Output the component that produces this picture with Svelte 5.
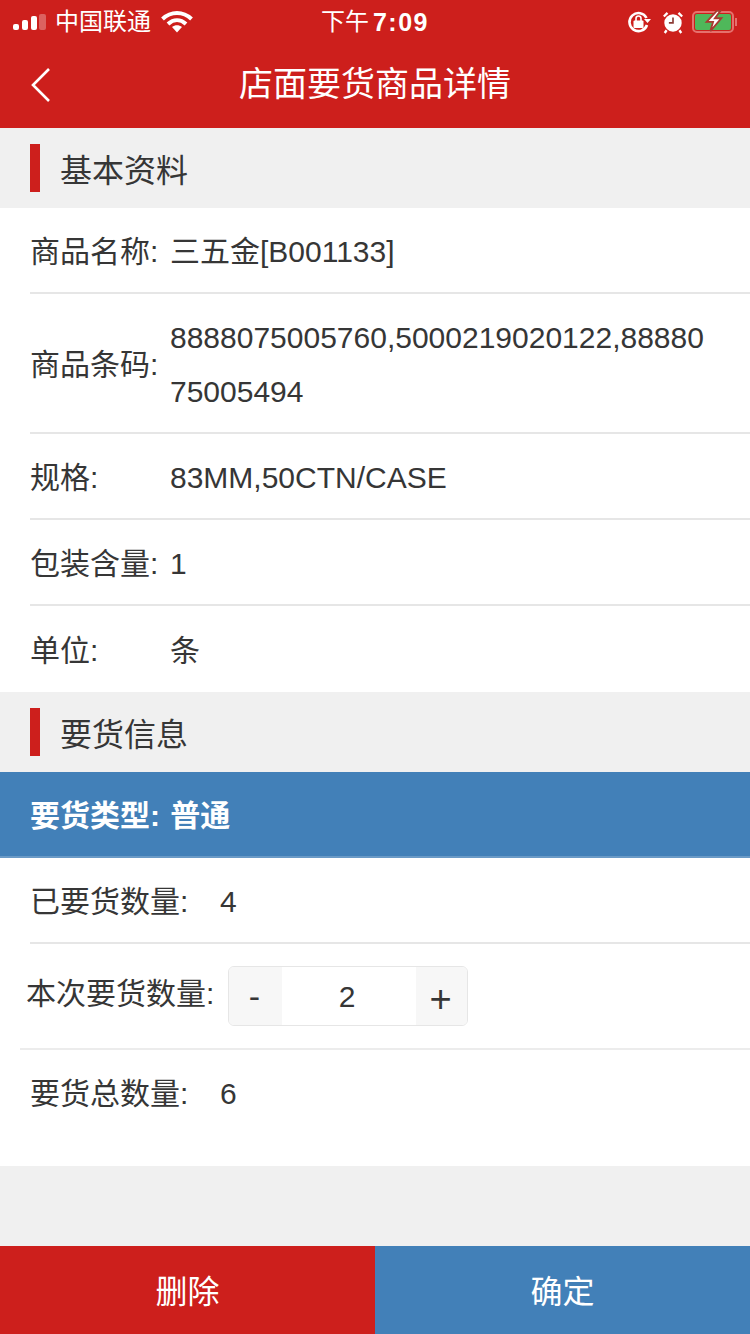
<script>
  const basics = [
    { label: '商品名称:', value: '三五金[B001133]' },
    { label: '商品条码:', value: '8888075005760,5000219020122,8888075005494', tall: true },
    { label: '规格:', value: '83MM,50CTN/CASE' },
    { label: '包装含量:', value: '1' },
    { label: '单位:', value: '条' }
  ];
</script>

<div class="page">
  <header class="top">
    <div class="status">
      <div class="status-left">
        <svg class="signal" width="34" height="20" viewBox="0 0 34 20" aria-hidden="true">
          <rect x="0" y="12" width="6" height="6" rx="2" fill="#fff" />
          <rect x="9" y="8" width="6" height="10" rx="2" fill="#fff" />
          <rect x="18" y="4" width="6" height="14" rx="2" fill="#fff" />
          <rect x="26" y="2" width="7" height="16" rx="2" fill="#fff" opacity="0.3" />
        </svg>
        <span class="carrier">中国联通</span>
        <svg class="wifi" width="32" height="22" viewBox="0 0 32 22" aria-hidden="true">
          <path d="M1.500 8C10 0 22 0 30.500 8" fill="none" stroke="#fff" stroke-width="4" />
          <path d="M7 13C12.500 8 19.500 8 25 13" fill="none" stroke="#fff" stroke-width="4" />
          <path d="M11 16C14 13.500 18 13.500 21 16L16 21.500Z" fill="#fff" />
        </svg>
      </div>
      <div class="clock">下午<b>7:09</b></div>
      <div class="status-right">
        <svg class="lock" width="24" height="24" viewBox="0 0 24 24" aria-hidden="true">
          <path d="M19.500 8A9 9 0 1 0 20 15" fill="none" stroke="#fff" stroke-width="2.600" />
          <path d="M17 9L24 9L20.500 13Z" fill="#fff" />
          <rect x="6.500" y="10.500" width="10" height="7.500" rx="1" fill="#fff" />
          <path d="M9 11V8.500a2.500 2.500 0 0 1 5 0V11" fill="none" stroke="#fff" stroke-width="1.600" />
        </svg>
        <svg class="alarm" width="22" height="24" viewBox="0 0 24 26" aria-hidden="true">
          <circle cx="12" cy="14" r="9.500" fill="#fff" />
          <path d="M2 7L6 3M22 7L18 3M5 22L3 25M19 22L21 25" stroke="#fff" stroke-width="2.500" />
          <path d="M12 8V14H7.500" fill="none" stroke="#8c3a34" stroke-width="1.800" />
        </svg>
        <div class="battery">
          <div class="battery-body">
            <svg class="bolt" width="22" height="22" viewBox="0 0 24 24" aria-hidden="true">
              <path d="M15 1L4 13H11L8 23L20 9H13L19 1Z" fill="#fff" stroke="#a83a30" stroke-width="2" />
            </svg>
          </div>
          <div class="battery-cap"></div>
        </div>
      </div>
    </div>
    <div class="nav">
      <svg class="back" width="24" height="36" viewBox="0 0 24 36" aria-hidden="true">
        <path d="M20 2L4 18L20 34" fill="none" stroke="#fff" stroke-width="2.600" />
      </svg>
      <h1>店面要货商品详情</h1>
    </div>
  </header>

  <h2 class="section"><span class="mark"></span><span class="section-text">基本资料</span></h2>
  <section class="list">
    {#each basics as row}
      <div class="row" class:tall={row.tall}>
        <span class="label">{row.label}</span>
        <span class="value">{row.value}</span>
      </div>
    {/each}
  </section>

  <h2 class="section"><span class="mark"></span><span class="section-text">要货信息</span></h2>
  <div class="type"><span class="nudge">要货类型: 普通</span></div>
  <section class="order">
    <div class="order-row">
      <span class="order-label">已要货数量:</span><span class="order-value">4</span>
    </div>
    <div class="qty-row">
      <span class="qty-label">本次要货数量:</span>
      <div class="stepper">
        <span class="step minus">-</span>
        <span class="count">2</span>
        <span class="step plus">+</span>
      </div>
    </div>
    <div class="order-row total">
      <span class="order-label">要货总数量:</span><span class="order-value">6</span>
    </div>
  </section>

  <div class="spacer"></div>

  <footer class="actions">
    <button class="del">删除</button>
    <button class="ok">确定</button>
  </footer>
</div>

<style>
  :global(body) {
    margin: 0;
    background: #f0f0f0;
  }
  .page {
    width: 750px;
    height: 1334px;
    display: flex;
    flex-direction: column;
    background: #f0f0f0;
    color: #363636;
    font-family: "Liberation Sans", "Noto Sans CJK SC", sans-serif;
    font-size: 30px;
    line-height: 44px;
    overflow: hidden;
  }
  .top {
    height: 128px;
    background: #cd1f1c;
    color: #fff;
    flex: none;
  }
  .status {
    height: 40px;
    display: grid;
    grid-template-columns: 1fr auto 1fr;
    align-items: center;
    padding: 0 13px;
  }
  .status-left {
    display: flex;
    align-items: center;
  }
  .carrier {
    font-size: 24px;
    margin-left: 8px;
  }
  .wifi {
    margin-left: 10px;
  }
  .clock {
    font-size: 24px;
    display: flex;
    align-items: center;
  }
  .clock b {
    margin-left: 4px;
    letter-spacing: 1.500px;
    font-size: 25px;
  }
  .status-right {
    display: flex;
    align-items: center;
    justify-content: flex-end;
  }
  .alarm {
    margin-left: 11px;
    margin-right: 8px;
  }
  .battery {
    display: flex;
    align-items: center;
  }
  .battery-body {
    position: relative;
    width: 36px;
    height: 16px;
    border: 2px solid #e5716d;
    border-radius: 5px;
    padding: 1px;
    background: #4fb85a content-box;
  }
  .bolt {
    position: absolute;
    left: 9px;
    top: -3px;
  }
  .battery-cap {
    width: 2px;
    height: 8px;
    background: #e5716d;
    margin-left: 1px;
  }
  .nav {
    height: 88px;
    display: flex;
    align-items: center;
    justify-content: center;
    position: relative;
  }
  .back {
    position: absolute;
    left: 29px;
    top: 27px;
  }
  h1 {
    margin: 0;
    font-size: 34px;
    font-weight: 400;
    line-height: 88px;
  }
  .section {
    height: 80px;
    margin: 0;
    display: flex;
    align-items: center;
    padding-left: 30px;
    font-size: 32px;
    font-weight: 400;
    background: #f0f0f0;
    flex: none;
  }
  .section-text {
    padding-top: 6px;
  }
  .mark {
    width: 10px;
    height: 48px;
    background: #cd1f1c;
    margin-right: 20px;
  }
  .list {
    background: #fff;
    padding-left: 30px;
    flex: none;
  }
  .row {
    display: flex;
    align-items: center;
    height: 86px;
    box-sizing: border-box;
    border-bottom: 2px solid #e6e6e6;
  }
  .row.tall {
    height: 140px;
  }
  .row:last-child {
    border-bottom: 0;
  }
  .label {
    width: 140px;
    flex: none;
    padding-top: 4px;
  }
  .value {
    width: 540px;
    word-break: break-all;
    padding-top: 4px;
  }
  .tall .value {
    line-height: 54px;
  }
  .type {
    height: 86px;
    box-sizing: border-box;
    padding-left: 30px;
    display: flex;
    align-items: center;
    background: #4280b8;
    color: #fff;
    font-weight: 700;
    word-spacing: 2px;
    flex: none;
    border-bottom: 2px solid #6a9ac6;
  }
  .nudge {
    padding-top: 4px;
  }
  .order {
    background: #fff;
    flex: none;
    height: 308px;
  }
  .order-row {
    height: 86px;
    box-sizing: border-box;
    margin-left: 30px;
    display: flex;
    align-items: center;
    border-bottom: 2px solid #e6e6e6;
  }
  .order-row.total {
    border-bottom: 0;
    height: 88px;
  }
  .order-label,
  .order-value {
    padding-top: 4px;
  }
  .order-row.total .order-label,
  .order-row.total .order-value {
    padding-top: 0;
  }
  .order-label {
    width: 190px;
  }
  .qty-row {
    height: 106px;
    box-sizing: border-box;
    margin-left: 20px;
    display: flex;
    align-items: center;
    border-bottom: 2px solid #ececec;
  }
  .qty-label {
    margin-left: 6px;
    width: 202px;
    margin-top: -4px;
  }
  .stepper {
    width: 240px;
    height: 60px;
    box-sizing: border-box;
    border: 1px solid #e6e6e6;
    border-radius: 6px;
    display: grid;
    grid-template-columns: 53px 1fr 51px;
    align-items: center;
    text-align: center;
    overflow: hidden;
  }
  .step {
    background: #f7f7f7;
    height: 100%;
    display: flex;
    align-items: center;
    justify-content: center;
    font-size: 34px;
  }
  .minus {
    padding-right: 2px;
    box-sizing: border-box;
  }
  .plus {
    font-size: 38px;
    padding-top: 6px;
    padding-right: 2px;
    box-sizing: border-box;
  }
  .count {
    padding-top: 2px;
    padding-right: 4px;
  }
  .spacer {
    flex: 1;
  }
  .actions {
    height: 88px;
    display: flex;
    flex: none;
  }
  button {
    flex: 1;
    border: 0;
    padding: 0;
    color: #fff;
    font: inherit;
    font-size: 32px;
    padding-top: 4px;
  }
  .del {
    background: #cd1f1c;
  }
  .ok {
    background: #4280b8;
  }
</style>
